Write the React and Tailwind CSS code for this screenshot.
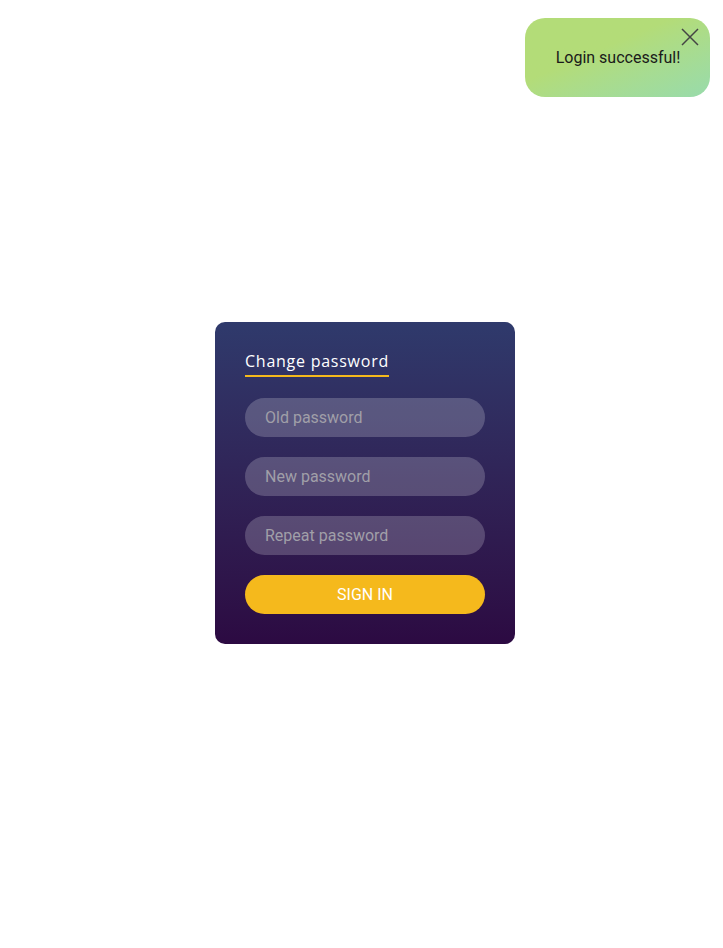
import React from "react";

const Toast = () => (
  <div className="absolute top-[18px] right-[13px] w-[185px] h-[79px] rounded-[20px] bg-gradient-to-br from-[#b3dc78] from-40% to-[#98dbab] flex items-center justify-center">
    <span className="text-[16px] text-[#1a1a1a] font-['Roboto',sans-serif] pl-[1px]">
      Login successful!
    </span>
    <button className="absolute top-[10px] right-[11px] text-[#444]">
      <svg width="18" height="18" viewBox="0 0 18 18" fill="none" stroke="currentColor" strokeWidth="1.5">
        <path d="M1 1L17 17M17 1L1 17" />
      </svg>
    </button>
  </div>
);

const Field = ({ placeholder }) => (
  <input
    type="password"
    placeholder={placeholder}
    className="w-full h-[39px] rounded-full bg-white/20 px-5 text-[16px] text-white placeholder:text-[#a09fa8] outline-none font-['Roboto',sans-serif]"
  />
);

const App = () => {
  return (
    <div className="relative min-h-screen bg-white">
      <Toast />
      <div className="flex justify-center pt-[322px] pl-[7px]">
        <div className="w-[300px] rounded-[10px] bg-gradient-to-b from-[#2f3a6c] to-[#2c0a42] p-[30px] flex flex-col">
          <div className="self-start text-white text-[16px] font-['Open_Sans',sans-serif] tracking-[0.75px] border-b-2 border-[#f4b91c] pb-[4px] leading-[19px] mb-[21px]">
            Change password
          </div>
          <div className="flex flex-col gap-[20px]">
            <Field placeholder="Old password" />
            <Field placeholder="New password" />
            <Field placeholder="Repeat password" />
            <button className="w-full h-[39px] rounded-full bg-[#f5b91c] text-white text-[16px] font-normal uppercase font-['Roboto',sans-serif]">
              Sign in
            </button>
          </div>
        </div>
      </div>
    </div>
  );
};

export default App;
